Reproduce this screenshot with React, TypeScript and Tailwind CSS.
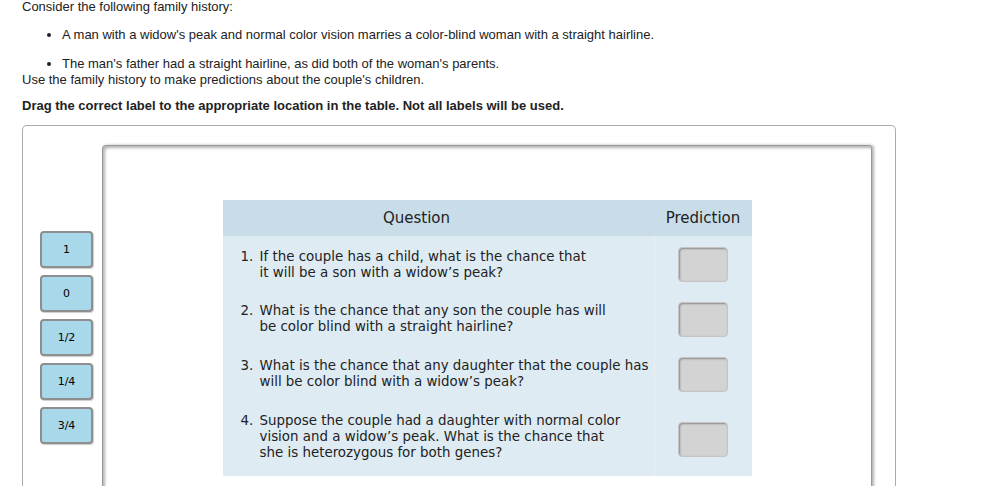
import React from "react";

const labels = ["1", "0", "1/2", "1/4", "3/4"];

const questions = [
  {
    n: "1.",
    lines: ["If the couple has a child, what is the chance that", "it will be a son with a widow\u2019s peak?"],
    pad: "pt-[13px] pb-[11px]",
  },
  {
    n: "2.",
    lines: ["What is the chance that any son the couple has will", "be color blind with a straight hairline?"],
    pad: "pt-[11px] pb-[12px]",
  },
  {
    n: "3.",
    lines: ["What is the chance that any daughter that the couple has", "will be color blind with a widow\u2019s peak?"],
    pad: "pt-[11px] pb-[12px]",
  },
  {
    n: "4.",
    lines: [
      "Suppose the couple had a daughter with normal color",
      "vision and a widow\u2019s peak. What is the chance that",
      "she is heterozygous for both genes?",
    ],
    pad: "pt-[11px] pb-[15px]",
  },
];

const Label = ({ text }: { text: string }) => (
  <div className="w-[53px] h-[37px] flex items-center justify-center rounded-[4px] border-2 border-[#8e8e8e] bg-[#a8d8ea] text-[11px] text-black font-['DejaVu_Sans',sans-serif] shadow-[1px_1px_1px_rgba(0,0,0,0.2)]">
    {text}
  </div>
);

const DropZone = () => (
  <div className="w-[50px] h-[35px] rounded-[4px] bg-[#d3d3d3] border border-[#c4c4c4] shadow-[inset_1px_1px_2px_rgba(0,0,0,0.35)]"></div>
);

export default function App() {
  return (
    <div className="h-[486px] overflow-hidden bg-white pl-[22px] text-[13px] leading-[14px] text-[#222] font-['Liberation_Sans',Arial,sans-serif]">
      <p>Consider the following family history:</p>
      <ul className="list-disc pl-[40px]">
        <li className="mt-[14px]">
          A man with a widow's peak and normal color vision marries a color-blind woman with a straight hairline.
        </li>
        <li className="mt-[15px]">The man's father had a straight hairline, as did both of the woman's parents.</li>
      </ul>
      <p className="mt-[2px]">Use the family history to make predictions about the couple's children.</p>
      <p className="mt-[12px] font-bold">Drag the correct label to the appropriate location in the table. Not all labels will be used.</p>

      <div className="mt-[12px] w-[874px] h-[400px] rounded-t-[5px] border border-b-0 border-[#ababab] flex">
        <div className="w-[79px] shrink-0 pl-[17px] pt-[105px] flex flex-col gap-[7px]">
          {labels.map((l) => (
            <Label key={l} text={l} />
          ))}
        </div>
        <div className="mt-[19px] w-[770px] h-[400px] rounded-tl-[4px] rounded-tr-[3px] border border-b-0 border-[#9a9a9a] shadow-[inset_2px_2px_3px_rgba(0,0,0,0.3),2px_0_3px_rgba(0,0,0,0.3)] pt-[54px] flex justify-center">
          <div className="w-[529px] h-fit font-['DejaVu_Sans',Verdana,sans-serif] text-[#222]">
            <div className="flex h-[36px] bg-[#c9dde9] text-[15px] items-center">
              <div className="w-[432px] text-center pr-[44px]">Question</div>
              <div className="flex-1 text-center">Prediction</div>
            </div>
            <div className="bg-[#deebf3]">
              {questions.map((q) => (
                <div key={q.n} className="flex">
                  <div className={`w-[432px] border-r border-[#e8f0f6] pl-[18px] text-[13.4px] leading-[16px] flex ${q.pad}`}>
                    <span className="w-[19px] shrink-0">{q.n}</span>
                    <div>
                      {q.lines.map((line) => (
                        <div key={line} className="whitespace-nowrap">{line}</div>
                      ))}
                    </div>
                  </div>
                  <div className="flex-1 flex items-center justify-center">
                    <DropZone />
                  </div>
                </div>
              ))}
            </div>
          </div>
        </div>
      </div>
    </div>
  );
}
